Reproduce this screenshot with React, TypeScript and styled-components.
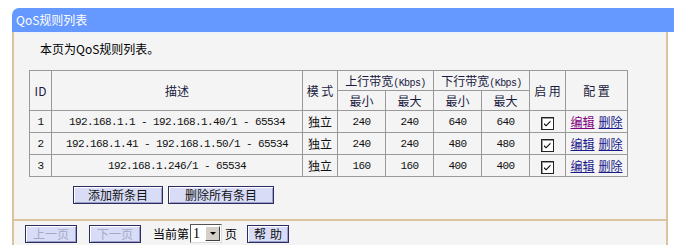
import React from "react";
import styled, { createGlobalStyle } from "styled-components";

const GlobalStyle = createGlobalStyle`
  body {
    margin: 0;
    background: #ffffff;
    font-family: "Noto Sans CJK SC", "Liberation Sans", sans-serif;
    font-size: 12px;
    color: #000000;
  }
`;

const Frame = styled.div`
  padding: 8px 0 0 12px;
`;

const TitleBar = styled.div`
  height: 24px;
  line-height: 24px;
  background: #6699ff;
  border-top-left-radius: 7px;
  color: #ffffff;
  padding-left: 4px;
  font-size: 12px;
`;

const Panel = styled.div`
  width: 652px;
  border-left: 2px solid #dcc3a0;
  border-right: 2px solid #dcc3a0;
  border-bottom: 2px solid #dcc3a0;
  background: #f4f4f4;
`;

const Body = styled.div`
  border-top: 2px solid #eef2fb;
  padding: 6px 0 15px 15px;
`;

const Intro = styled.div`
  height: 18px;
  line-height: 18px;
  padding-left: 11px;
  margin-bottom: 12px;
`;

const Grid = styled.table`
  border-collapse: collapse;
  table-layout: fixed;
  width: 598px;
  border: 1px solid #8a8a8a;
`;

const Th = styled.th<{ $h?: number }>`
  border: 1px solid #9a9a9a;
  height: ${(p) => p.$h ?? 19}px;
  padding: 0;
  font-weight: normal;
  text-align: center;
  color: #1a1a40;
  font-size: 12px;
  white-space: pre;
`;

const Td = styled.td<{ $mono?: boolean }>`
  border: 1px solid #9a9a9a;
  height: 21px;
  padding: 0;
  text-align: center;
  white-space: nowrap;
  font-family: ${(p) =>
    p.$mono ? `"Liberation Mono", monospace` : `"Noto Sans CJK SC", sans-serif`};
  font-size: ${(p) => (p.$mono ? "11px" : "12px")};
  letter-spacing: ${(p) => (p.$mono ? "-0.6px" : "0")};
  color: #111;
`;

const Kbps = styled.span`
  font-family: "Liberation Mono", monospace;
  font-size: 10px;
  letter-spacing: -0.6px;
`;

const Check = styled.span`
  display: inline-block;
  width: 11px;
  height: 11px;
  border: 1px solid #222;
  background: #fff;
  box-shadow: inset 1px 1px 0 #9a9a9a;
  vertical-align: middle;
  svg {
    display: block;
  }
`;

const Link = styled.a<{ $visited?: boolean }>`
  color: ${(p) => (p.$visited ? "#800080" : "#1a1a8a")};
  text-decoration: underline;
  margin: 0 2px;
  cursor: pointer;
`;

const Actions = styled.div`
  display: flex;
  gap: 5px;
  padding-left: 44px;
  margin-top: 9px;
`;

const Button = styled.button<{ $w: number; $disabled?: boolean }>`
  width: ${(p) => p.$w}px;
  height: 18px;
  padding: 0;
  background: #d8dcf6;
  border: 1px solid #2c2c5e;
  box-shadow: inset 1px 1px 0 #ffffff, inset -1px -1px 0 #9aa0c8;
  font-family: "Noto Sans CJK SC", sans-serif;
  font-size: 12px;
  line-height: 16px;
  letter-spacing: ${(p) => (p.$w < 50 ? "4px" : "0")};
  text-indent: ${(p) => (p.$w < 50 ? "4px" : "0")};
  color: ${(p) => (p.$disabled ? "#a6a9c8" : "#111")};
`;

const Footer = styled.div`
  border-top: 2px solid #dcc3a0;
  height: 25px;
  display: flex;
  align-items: center;
  padding-left: 11px;
  gap: 12px;
`;

const Pager = styled.span`
  display: flex;
  align-items: center;
  margin-right: -2px;
`;

const Select = styled.span`
  display: inline-flex;
  align-items: center;
  height: 17px;
  border: 1px solid #555;
  border-right-color: #ddd;
  border-bottom-color: #ddd;
  background: #fff;
  margin: 0 3px 0 1px;
`;

const SelectValue = styled.span`
  width: 12px;
  padding-left: 2px;
  font-family: "Liberation Serif", serif;
  font-size: 14px;
  line-height: 16px;
`;

const SelectArrow = styled.span`
  width: 15px;
  height: 15px;
  margin-right: 1px;
  background: #d4d0c8;
  border: 1px solid #fff;
  border-right-color: #404040;
  border-bottom-color: #404040;
  box-sizing: border-box;
  display: flex;
  align-items: center;
  justify-content: center;
  &::after {
    content: "";
    border-left: 3px solid transparent;
    border-right: 3px solid transparent;
    border-top: 3px solid #000;
  }
`;

type Rule = {
  id: number;
  desc: string;
  upMin: number;
  upMax: number;
  downMin: number;
  downMax: number;
};

const rules: Rule[] = [
  { id: 1, desc: "192.168.1.1 - 192.168.1.40/1 - 65534", upMin: 240, upMax: 240, downMin: 640, downMax: 640 },
  { id: 2, desc: "192.168.1.41 - 192.168.1.50/1 - 65534", upMin: 240, upMax: 240, downMin: 480, downMax: 480 },
  { id: 3, desc: "192.168.1.246/1 - 65534", upMin: 160, upMax: 160, downMin: 400, downMax: 400 },
];

const CheckMark = () => (
  <Check>
    <svg width="11" height="11" viewBox="0 0 11 11">
      <path d="M2 5 L4 7 L8.5 2.5 L8.5 4 L4 8.5 L2 6.5 Z" fill="#000" />
    </svg>
  </Check>
);

export default function App() {
  return (
    <>
      <GlobalStyle />
      <Frame>
        <TitleBar>QoS规则列表</TitleBar>
        <Panel>
          <Body>
            <Intro>本页为QoS规则列表。</Intro>
            <Grid>
              <colgroup>
                <col style={{ width: 22 }} />
                <col style={{ width: 251 }} />
                <col style={{ width: 35 }} />
                <col style={{ width: 48 }} />
                <col style={{ width: 48 }} />
                <col style={{ width: 48 }} />
                <col style={{ width: 48 }} />
                <col style={{ width: 36 }} />
                <col style={{ width: 62 }} />
              </colgroup>
              <thead>
                <tr>
                  <Th rowSpan={2}>ID</Th>
                  <Th rowSpan={2}>描述</Th>
                  <Th rowSpan={2}>{"模 式"}</Th>
                  <Th colSpan={2}>
                    上行带宽<Kbps>(Kbps)</Kbps>
                  </Th>
                  <Th colSpan={2}>
                    下行带宽<Kbps>(Kbps)</Kbps>
                  </Th>
                  <Th rowSpan={2}>{"启 用"}</Th>
                  <Th rowSpan={2}>{"配 置"}</Th>
                </tr>
                <tr>
                  <Th>最小</Th>
                  <Th>最大</Th>
                  <Th>最小</Th>
                  <Th>最大</Th>
                </tr>
              </thead>
              <tbody>
                {rules.map((r) => (
                  <tr key={r.id}>
                    <Td $mono>{r.id}</Td>
                    <Td $mono>{r.desc}</Td>
                    <Td>独立</Td>
                    <Td $mono>{r.upMin}</Td>
                    <Td $mono>{r.upMax}</Td>
                    <Td $mono>{r.downMin}</Td>
                    <Td $mono>{r.downMax}</Td>
                    <Td>
                      <CheckMark />
                    </Td>
                    <Td>
                      <Link $visited={r.id === 1}>编辑</Link>
                      <Link>删除</Link>
                    </Td>
                  </tr>
                ))}
              </tbody>
            </Grid>
            <Actions>
              <Button $w={90}>添加新条目</Button>
              <Button $w={106}>删除所有条目</Button>
            </Actions>
          </Body>
          <Footer>
            <Button $w={52} $disabled>
              上一页
            </Button>
            <Button $w={52} $disabled>
              下一页
            </Button>
            <Pager>
              当前第
              <Select>
                <SelectValue>1</SelectValue>
                <SelectArrow />
              </Select>
              页
            </Pager>
            <Button $w={42}>帮助</Button>
          </Footer>
        </Panel>
      </Frame>
    </>
  );
}
